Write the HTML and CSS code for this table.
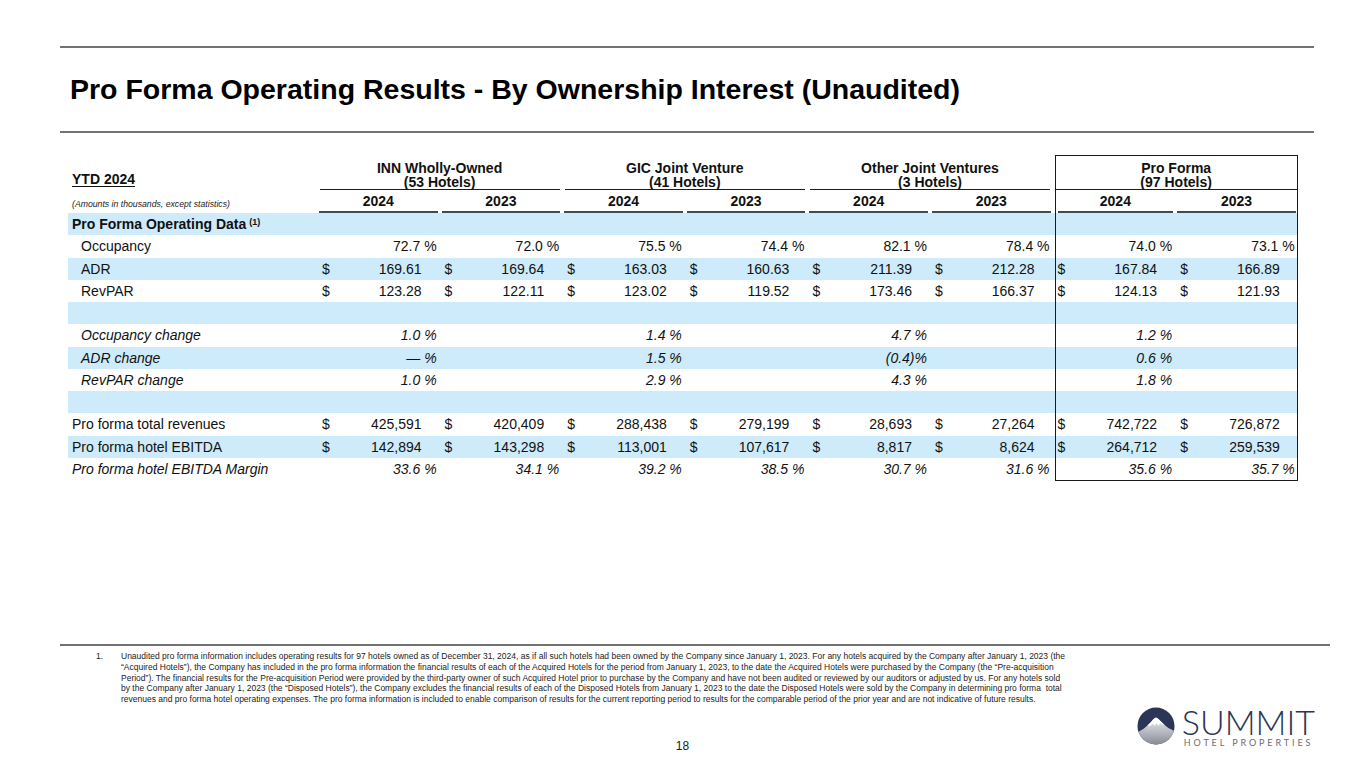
FILE: index.html
```html
<!DOCTYPE html>
<html lang="en">
<head>
<meta charset="utf-8">
<title>Pro Forma Operating Results</title>
<link rel="stylesheet" href="styles.css">
</head>
<body>
<div class="slide">
  <div class="rule rule-top"></div>
  <h1 class="title">Pro Forma Operating Results - By Ownership Interest (Unaudited)</h1>
  <div class="rule"></div>

  <div class="tbl">
    <div class="r">
      <div class="lbl ytd"><span>YTD 2024</span></div>
      <div class="grp"><span>INN Wholly-Owned</span><span>(53 Hotels)</span></div>
      <div class="grp"><span>GIC Joint Venture</span><span>(41 Hotels)</span></div>
      <div class="grp"><span>Other Joint Ventures</span><span>(3 Hotels)</span></div>
      <div class="grp grp-pf"><span>Pro Forma</span><span>(97 Hotels)</span></div>
    </div>
    <div class="r">
      <div class="lbl amt">(Amounts in thousands, except statistics)</div>
      <div class="yr">2024</div><div class="yr">2023</div>
      <div class="yr">2024</div><div class="yr">2023</div>
      <div class="yr">2024</div><div class="yr">2023</div>
      <div class="yr yr-pf">2024</div><div class="yr">2023</div>
    </div>

    <div class="r blue">
      <div class="lbl b">Pro Forma Operating Data <sup>(1)</sup></div>
      <div></div><div></div><div></div><div></div><div></div><div></div><div></div><div></div>
    </div>
    <div class="r">
      <div class="lbl ind">Occupancy</div>
      <div class="p">72.7 %</div><div class="p">72.0 %</div><div class="p">75.5 %</div><div class="p">74.4 %</div>
      <div class="p">82.1 %</div><div class="p">78.4 %</div><div class="p">74.0 %</div><div class="p">73.1 %</div>
    </div>
    <div class="r blue">
      <div class="lbl ind">ADR</div>
      <div class="d"><span>$</span><span>169.61</span></div><div class="d"><span>$</span><span>169.64</span></div>
      <div class="d"><span>$</span><span>163.03</span></div><div class="d"><span>$</span><span>160.63</span></div>
      <div class="d"><span>$</span><span>211.39</span></div><div class="d"><span>$</span><span>212.28</span></div>
      <div class="d"><span>$</span><span>167.84</span></div><div class="d"><span>$</span><span>166.89</span></div>
    </div>
    <div class="r">
      <div class="lbl ind">RevPAR</div>
      <div class="d"><span>$</span><span>123.28</span></div><div class="d"><span>$</span><span>122.11</span></div>
      <div class="d"><span>$</span><span>123.02</span></div><div class="d"><span>$</span><span>119.52</span></div>
      <div class="d"><span>$</span><span>173.46</span></div><div class="d"><span>$</span><span>166.37</span></div>
      <div class="d"><span>$</span><span>124.13</span></div><div class="d"><span>$</span><span>121.93</span></div>
    </div>
    <div class="r blue">
      <div class="lbl"></div>
      <div></div><div></div><div></div><div></div><div></div><div></div><div></div><div></div>
    </div>
    <div class="r it">
      <div class="lbl ind">Occupancy change</div>
      <div class="p">1.0 %</div><div></div><div class="p">1.4 %</div><div></div>
      <div class="p">4.7 %</div><div></div><div class="p">1.2 %</div><div></div>
    </div>
    <div class="r blue it">
      <div class="lbl ind">ADR change</div>
      <div class="p">— %</div><div></div><div class="p">1.5 %</div><div></div>
      <div class="p">(0.4)%</div><div></div><div class="p">0.6 %</div><div></div>
    </div>
    <div class="r it">
      <div class="lbl ind">RevPAR change</div>
      <div class="p">1.0 %</div><div></div><div class="p">2.9 %</div><div></div>
      <div class="p">4.3 %</div><div></div><div class="p">1.8 %</div><div></div>
    </div>
    <div class="r blue">
      <div class="lbl"></div>
      <div></div><div></div><div></div><div></div><div></div><div></div><div></div><div></div>
    </div>
    <div class="r">
      <div class="lbl">Pro forma total revenues</div>
      <div class="d"><span>$</span><span>425,591</span></div><div class="d"><span>$</span><span>420,409</span></div>
      <div class="d"><span>$</span><span>288,438</span></div><div class="d"><span>$</span><span>279,199</span></div>
      <div class="d"><span>$</span><span>28,693</span></div><div class="d"><span>$</span><span>27,264</span></div>
      <div class="d"><span>$</span><span>742,722</span></div><div class="d"><span>$</span><span>726,872</span></div>
    </div>
    <div class="r blue">
      <div class="lbl">Pro forma hotel EBITDA</div>
      <div class="d"><span>$</span><span>142,894</span></div><div class="d"><span>$</span><span>143,298</span></div>
      <div class="d"><span>$</span><span>113,001</span></div><div class="d"><span>$</span><span>107,617</span></div>
      <div class="d"><span>$</span><span>8,817</span></div><div class="d"><span>$</span><span>8,624</span></div>
      <div class="d"><span>$</span><span>264,712</span></div><div class="d"><span>$</span><span>259,539</span></div>
    </div>
    <div class="r it">
      <div class="lbl">Pro forma hotel EBITDA Margin</div>
      <div class="p">33.6 %</div><div class="p">34.1 %</div><div class="p">39.2 %</div><div class="p">38.5 %</div>
      <div class="p">30.7 %</div><div class="p">31.6 %</div><div class="p">35.6 %</div><div class="p">35.7 %</div>
    </div>

    <div class="pfbox"></div>
  </div>

  <div class="rule rule-bottom"></div>

  <div class="foot">
    <span class="fn-num">1.</span>
    <p class="fn-text">Unaudited pro forma information includes operating results for 97 hotels owned as of December 31, 2024, as if all such hotels had been owned by the Company since January 1, 2023. For any hotels acquired by the Company after January 1, 2023 (the<br>“Acquired Hotels”), the Company has included in the pro forma information the financial results of each of the Acquired Hotels for the period from January 1, 2023, to the date the Acquired Hotels were purchased by the Company (the “Pre-acquisition<br>Period”). The financial results for the Pre-acquisition Period were provided by the third-party owner of such Acquired Hotel prior to purchase by the Company and have not been audited or reviewed by our auditors or adjusted by us. For any hotels sold<br>by the Company after January 1, 2023 (the “Disposed Hotels”), the Company excludes the financial results of each of the Disposed Hotels from January 1, 2023 to the date the Disposed Hotels were sold by the Company in determining pro forma&nbsp; total<br>revenues and pro forma hotel operating expenses. The pro forma information is included to enable comparison of results for the current reporting period to results for the comparable period of the prior year and are not indicative of future results.</p>
  </div>

  <div class="bottom">
    <div></div>
    <div class="pagenum">18</div>
    <div class="logo">
      <svg class="logo-mark" width="38" height="38" viewBox="0 0 40 40" aria-hidden="true">
        <defs>
          <clipPath id="lc"><circle cx="20" cy="20" r="19.5"/></clipPath>
          <linearGradient id="lg" x1="0" y1="0" x2="0" y2="1">
            <stop offset="0" stop-color="#eceef2"/>
            <stop offset="1" stop-color="#868995"/>
          </linearGradient>
        </defs>
        <g clip-path="url(#lc)">
          <rect width="40" height="40" fill="#2b3656"/>
          <path d="M0 27 L7 23 L11 19.5 L14.5 16 L17.5 12.5 L20 11 L22.5 12.5 L25.5 15.5 L29 19 L33 22 L40 25.5 L40 40 L0 40 Z" fill="url(#lg)"/>
          <path d="M11 19.5 L14.5 16 L17.5 12.5 L20 11 L22.5 12.5 L25.5 15.5 L29 19 L26.5 18.5 L24.5 17 L22.5 19.5 L20.5 17 L18.5 19.5 L16.5 17.5 L14 20 Z" fill="#ffffff"/>
        </g>
      </svg>
      <div class="logo-text">
        <span class="logo-name">SUMMIT</span>
        <span class="logo-sub">HOTEL PROPERTIES</span>
      </div>
    </div>
  </div>
</div>
</body>
</html>
```

FILE: styles.css
```css
html, body {
  margin: 0;
  padding: 0;
  background: #ffffff;
}

body {
  font-family: "Liberation Sans", Arial, sans-serif;
  color: #000000;
}

.slide {
  width: 1365px;
  height: 768px;
  overflow: hidden;
  display: flex;
  flex-direction: column;
}

.rule {
  flex: none;
  height: 2px;
  width: 1254px;
  margin-left: 60px;
  background: #727272;
}

.rule-top {
  margin-top: 46px;
}

.title {
  flex: none;
  box-sizing: border-box;
  height: 83px;
  margin: 0;
  padding: 24px 0 0 70px;
  font-size: 28.5px;
  line-height: 34px;
  font-weight: bold;
  color: #000;
}

/* ---------- table ---------- */
.tbl {
  flex: none;
  position: relative;
  display: grid;
  grid-template-columns: 249px repeat(8, 122.6px);
  grid-template-rows: 35px 23px repeat(12, 22.25px);
  margin: 22px 0 0 68px;
  font-size: 14px;
  color: #111;
}

.r {
  display: contents;
}

.r > div {
  min-width: 0;
  white-space: nowrap;
}

.r.blue > div {
  background: #cdebfa;
}

.r.it > div {
  font-style: italic;
}

.lbl {
  display: flex;
  align-items: center;
  padding-left: 4px;
}

.lbl.ind {
  padding-left: 13px;
}

.lbl.b {
  font-weight: bold;
}

.lbl sup {
  font-size: 9px;
  margin-left: 3px;
  position: relative;
  top: -2px;
}

.ytd {
  align-items: flex-end;
  padding-bottom: 3px;
  font-weight: bold;
}

.ytd span {
  text-decoration: underline;
  text-underline-offset: 2px;
}

.amt {
  align-items: flex-end;
  padding-bottom: 4px;
  font-size: 8.7px;
  font-style: italic;
  color: #222;
}

.grp {
  grid-column: span 2;
  display: flex;
  flex-direction: column;
  justify-content: flex-end;
  align-items: center;
  margin: 0 2.5px;
  padding-bottom: 0.5px;
  border-bottom: 1.5px solid #1c1c1c;
  font-weight: bold;
  line-height: 14px;
  color: #111;
}

.grp-pf {
  margin: 0 0 0 2px;
}

.yr {
  display: flex;
  align-items: flex-end;
  justify-content: center;
  margin: 0 2px;
  padding-bottom: 2px;
  border-bottom: 2px solid #414a58;
  font-weight: bold;
  line-height: 16px;
}

.yr-pf {
  margin-left: 5px;
}

.d {
  display: flex;
  align-items: center;
  justify-content: space-between;
  padding: 0 18px 0 5px;
}

.p {
  display: flex;
  align-items: center;
  justify-content: flex-end;
  padding-right: 3px;
}

.pfbox {
  position: absolute;
  grid-column: 8 / 10;
  grid-row: 1 / -1;
  top: 0;
  left: 2px;
  right: 0;
  bottom: -1px;
  border: 1.5px solid #1a1a1a;
  pointer-events: none;
}

/* ---------- footer ---------- */
.rule-bottom {
  width: 1270px;
  margin-top: 164px;
}

.foot {
  flex: none;
  display: flex;
  margin: 5px 0 0 96px;
  font-size: 8.5px;
  line-height: 10.75px;
  color: #222;
}

.fn-num {
  width: 25px;
  flex: none;
}

.fn-text {
  margin: 0;
  white-space: nowrap;
}

.bottom {
  flex: none;
  display: grid;
  grid-template-columns: 1fr auto 1fr;
  height: 48px;
  margin-top: 1px;
}

.pagenum {
  align-self: end;
  padding-bottom: 1px;
  font-size: 12px;
  line-height: 14px;
  color: #222;
}

.logo {
  justify-self: end;
  display: flex;
  align-items: flex-start;
  gap: 7px;
  margin-right: 50px;
}

.logo-mark {
  flex: none;
  margin-top: 1px;
}

.logo-text {
  display: flex;
  flex-direction: column;
}

.logo-name {
  font-family: Lato, "Open Sans", sans-serif;
  font-weight: 300;
  font-size: 34px;
  line-height: 31px;
  letter-spacing: 0;
  color: #2b3450;
}

.logo-sub {
  font-family: Lato, "Open Sans", sans-serif;
  font-size: 9px;
  line-height: 11px;
  letter-spacing: 2.9px;
  color: #6a6d76;
  margin-left: 2px;
}
```
